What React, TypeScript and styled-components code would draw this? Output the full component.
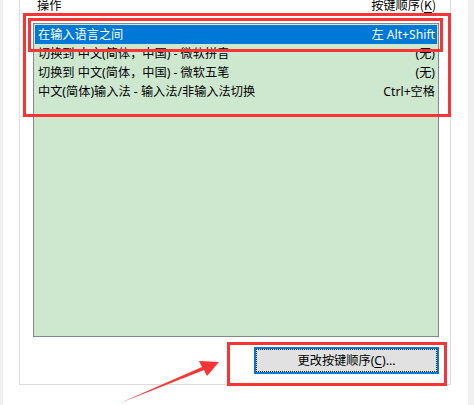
import React from "react";
import styled, { createGlobalStyle } from "styled-components";

const Global = createGlobalStyle`
  html, body { margin: 0; padding: 0; background: #f0f0f0; }
  body { font-family: "Noto Sans", "Noto Sans CJK SC", sans-serif; font-size: 12.2px; color: #000; }
`;

const Screen = styled.div`
  position: relative;
  width: 474px;
  height: 405px;
  overflow: hidden;
  display: flex;
  background: #f0f0f0;
`;

const Strip = styled.div<{ $w: number }>`
  width: ${(p) => p.$w}px;
  flex: none;
  background: #f0f0f0;
`;

const Main = styled.div`
  flex: 1;
  background: #fff;
  display: flex;
  flex-direction: column;
  padding-left: 16px;
  padding-right: 17px;
`;

const GroupBox = styled.div`
  margin-top: -3px;
  border: 1px solid #dcdcdc;
  border-top: none;
  padding: 0 11px 10px 13px;
  display: flex;
  flex-direction: column;
`;

const Header = styled.div`
  height: 16px;
  line-height: 16px;
  display: flex;
  justify-content: space-between;
  padding: 0 3px 0 4px;
  font-family: "Noto Sans CJK SC", sans-serif;
`;

const Under = styled.span`
  text-decoration: underline;
  text-underline-offset: 2px;
`;

const ListBox = styled.div`
  margin-top: 10px;
  height: 314px;
  box-sizing: border-box;
  border: 1px solid #828790;
  background: #cee8d0;
  padding: 1px;
  display: flex;
  flex-direction: column;
`;

const Row = styled.div<{ $selected?: boolean }>`
  height: 19px;
  line-height: 19px;
  display: flex;
  justify-content: space-between;
  padding: 0 2px 0 3px;
  white-space: nowrap;
  background: ${(p) => (p.$selected ? "#0078d7" : "transparent")};
  color: ${(p) => (p.$selected ? "#fff" : "#000")};
  font-family: "Noto Sans", "Noto Sans CJK SC", sans-serif;
`;

const ButtonRow = styled.div`
  margin-top: 10px;
  display: flex;
  justify-content: flex-end;
`;

const Button = styled.button`
  width: 185px;
  height: 27px;
  box-sizing: border-box;
  border: 2px solid #0078d7;
  background: #e1e1e1;
  padding: 0;
  display: flex;
  font-family: "Noto Sans", "Noto Sans CJK SC", sans-serif;
  font-size: 12.2px;
  color: #000;
`;

const FocusRing = styled.span`
  flex: 1;
  border: 1px dotted #222;
  display: flex;
  align-items: center;
  justify-content: center;
  line-height: 16px;
`;

const Mark = styled.div<{ $l: number; $t: number; $w: number; $h: number }>`
  position: absolute;
  left: ${(p) => p.$l}px;
  top: ${(p) => p.$t}px;
  width: ${(p) => p.$w}px;
  height: ${(p) => p.$h}px;
  box-sizing: border-box;
  border: 3px solid #fa3434;
  pointer-events: none;
`;

const Arrow = styled.svg`
  position: absolute;
  left: 0;
  top: 0;
  pointer-events: none;
`;

const rows = [
  { name: "在输入语言之间", key: "左 Alt+Shift", selected: true },
  { name: "切换到 中文(简体，中国) - 微软拼音", key: "(无)" },
  { name: "切换到 中文(简体，中国) - 微软五笔", key: "(无)" },
  { name: "中文(简体)输入法 - 输入法/非输入法切换", key: "Ctrl+空格" },
];

export default function App() {
  return (
    <>
      <Global />
      <Screen>
        <Strip $w={3} />
        <Main>
          <GroupBox>
            <Header>
              <span>操作</span>
              <span>
                按键顺序(<Under>K</Under>)
              </span>
            </Header>
            <ListBox>
              {rows.map((r) => (
                <Row key={r.name} $selected={r.selected}>
                  <span>{r.name}</span>
                  <span>{r.key}</span>
                </Row>
              ))}
            </ListBox>
            <ButtonRow>
              <Button>
                <FocusRing>
                  更改按键顺序(<Under>C</Under>)...
                </FocusRing>
              </Button>
            </ButtonRow>
          </GroupBox>
        </Main>
        <Strip $w={6} />
        <Mark $l={23} $t={13} $w={428} $h={104} />
        <Mark $l={28} $t={18} $w={415} $h={34} />
        <Mark $l={227} $t={342} $w={220} $h={44} />
        <Arrow width="474" height="405" viewBox="0 0 474 405">
          <path d="M120 403 L202 367 L199 361 L219 362 L207 376 L204 370 Z" fill="#fa3434" />
        </Arrow>
      </Screen>
    </>
  );
}
